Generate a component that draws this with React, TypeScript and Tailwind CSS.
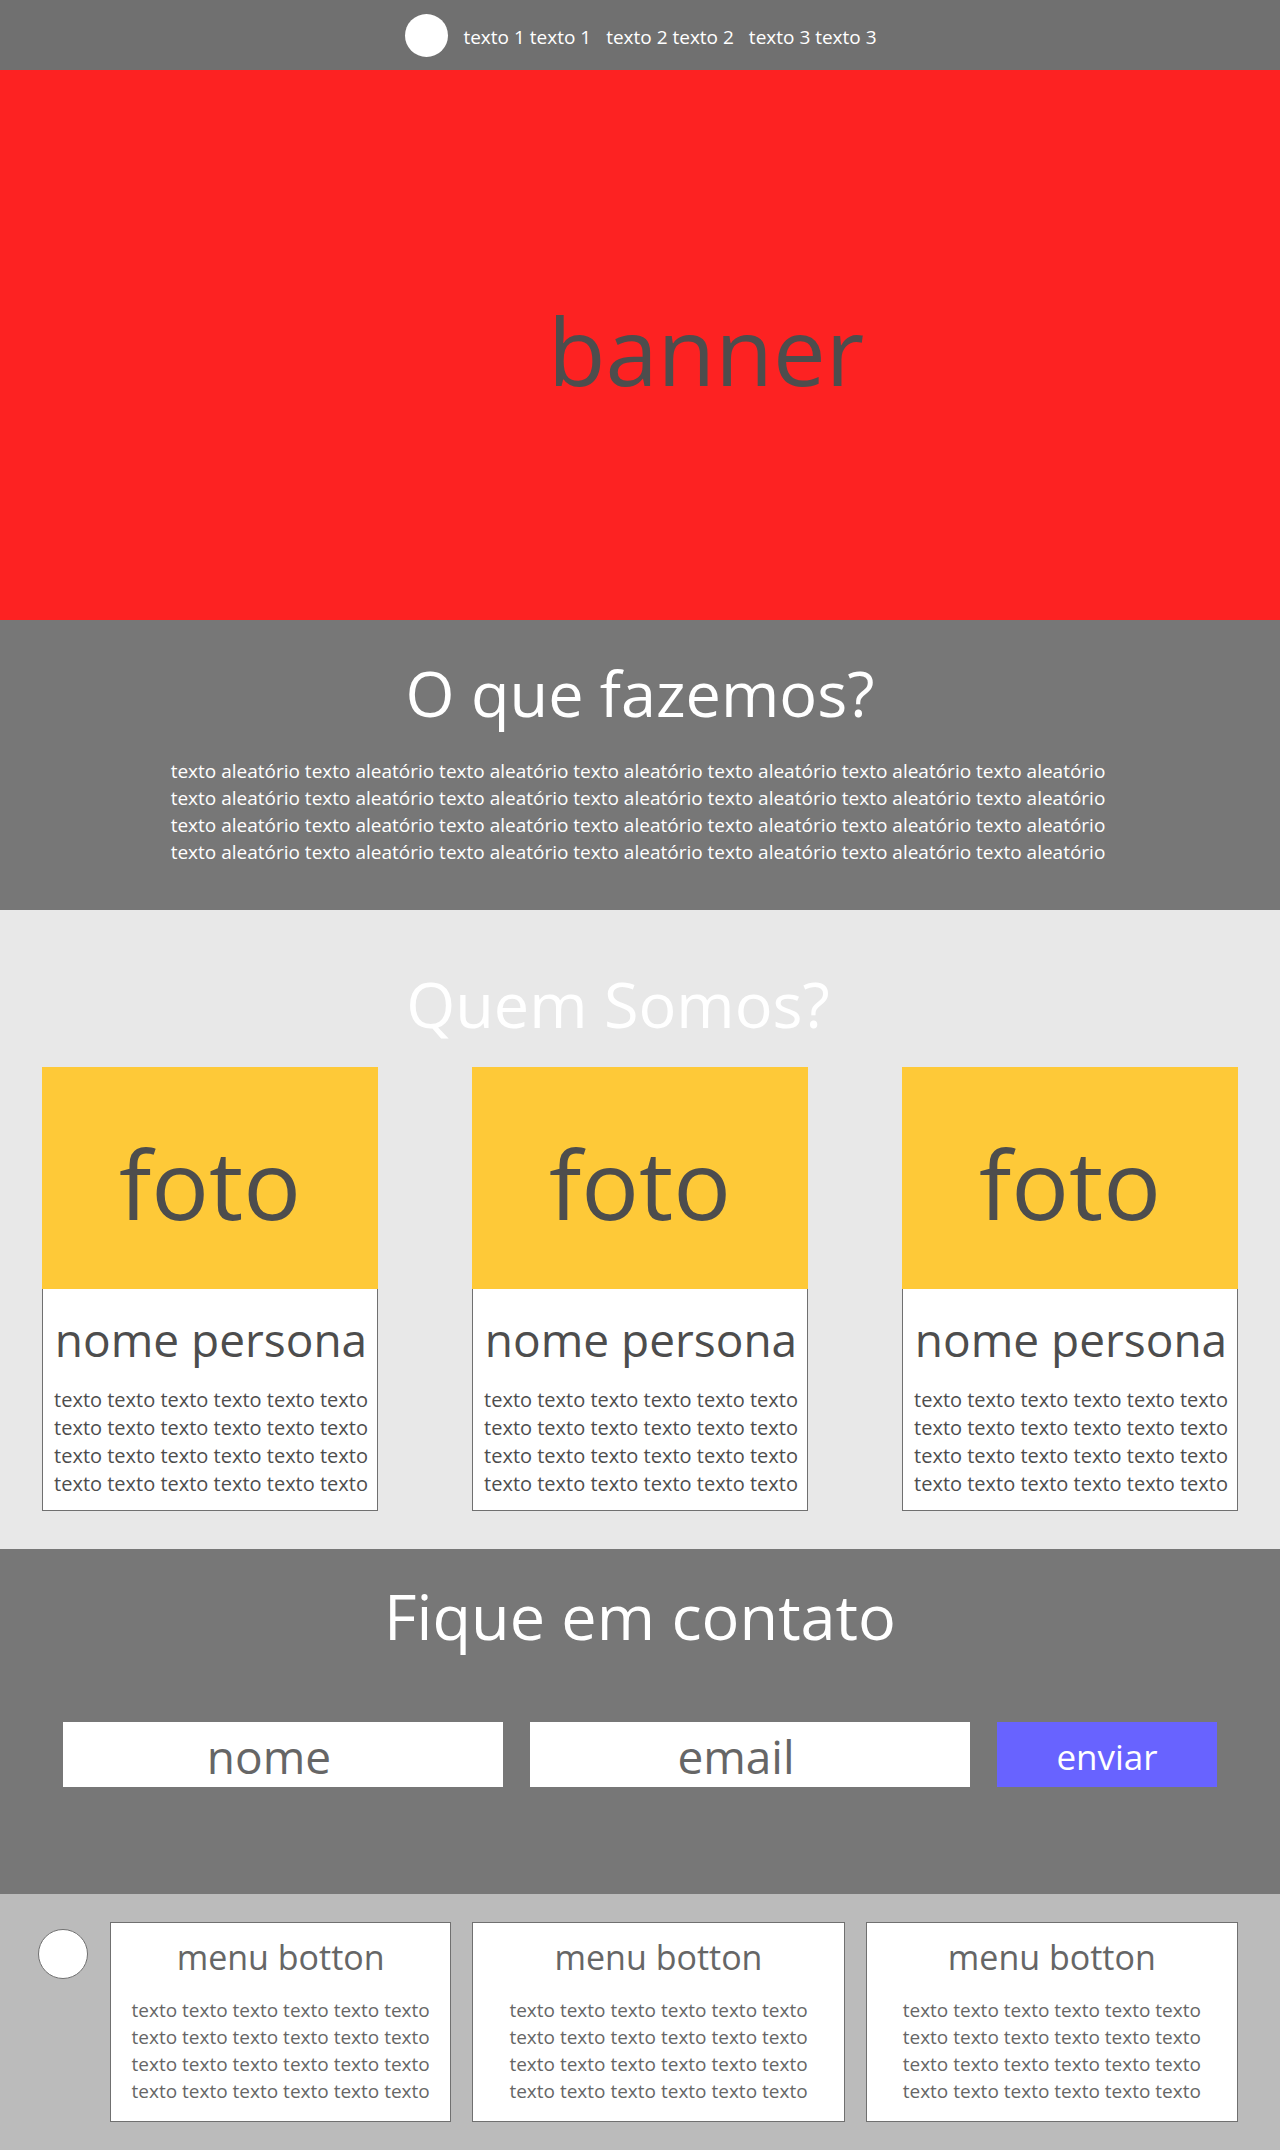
const navItems = ["texto 1 texto 1", "texto 2 texto 2", "texto 3 texto 3"];
const rows = [0, 1, 2, 3];
const aboutLine = Array(7).fill("texto aleatório").join(" ");
const shortLine = Array(6).fill("texto").join(" ");

function Lines({ text, className }: { text: string; className: string }) {
  return (
    <p className={className}>
      {rows.map((r) => (
        <span key={r} className="block whitespace-nowrap">
          {text}
        </span>
      ))}
    </p>
  );
}

function PersonCard() {
  return (
    <article className="min-w-0 text-center text-[#4d4d4d]">
      <div className="flex h-[222px] items-center justify-center bg-[#fec938] pt-2.5 text-[96px] leading-none">
        foto
      </div>
      <div className="border-x border-b border-[#707070] bg-white pt-[18px] pb-3 pl-0.5">
        <h3 className="text-[46px] leading-[64px] whitespace-nowrap">nome persona</h3>
        <Lines text={shortLine} className="mt-[15px] flex flex-col items-center text-[20px] leading-7" />
      </div>
    </article>
  );
}

function FooterCard() {
  return (
    <section className="min-w-0 border border-[#707070] bg-white pt-2.5 pb-4 text-center text-[#666666]">
      <h3 className="text-[34px] leading-[48px] whitespace-nowrap">menu botton</h3>
      <Lines text={shortLine} className="mt-4 flex flex-col items-center text-[19px] leading-[27px]" />
    </section>
  );
}

export default function App() {
  return (
    <div className="font-['Open_Sans','Noto_Sans',sans-serif] text-white">
      <header className="flex h-[70px] items-center justify-center gap-[15px] bg-[#707070] pl-0.5">
        <div className="size-[43px] rounded-full bg-white" />
        <nav className="flex gap-[15px] pt-1 text-[19px] leading-[27px]">
          {navItems.map((item) => (
            <a key={item} href="#" className="whitespace-nowrap">
              {item}
            </a>
          ))}
        </nav>
      </header>

      <section className="flex h-[550px] items-center justify-center bg-[#fd2222] pt-2.5 pl-[132px] text-[94px] leading-none text-[#4d4d4d]">
        banner
      </section>

      <section className="bg-[#777777] pt-8 pb-11">
        <h2 className="text-center text-[63px] leading-[82px]">O que fazemos?</h2>
        <Lines text={aboutLine} className="mt-6 flex flex-col items-center pr-1 text-[19px] leading-[27px]" />
      </section>

      <section className="bg-[#e8e8e8] px-[42px] pt-[53px] pb-[38px]">
        <h2 className="pr-[44px] text-center text-[63px] leading-[82px]">Quem Somos?</h2>
        <div className="mt-[22px] grid grid-cols-3 gap-[94px]">
          <PersonCard />
          <PersonCard />
          <PersonCard />
        </div>
      </section>

      <section className="bg-[#777777] px-[63px] pt-[26px] pb-[107px]">
        <h2 className="text-center text-[63px] leading-[82px]">Fique em contato</h2>
        <form className="mt-[65px] grid grid-cols-[2fr_2fr_1fr] gap-[27px]" onSubmit={(e) => e.preventDefault()}>
          <input
            type="text"
            aria-label="nome"
            placeholder="nome"
            className="h-[65px] w-full min-w-0 bg-white pt-1 pr-7 text-center text-[46px] text-[#666666] placeholder:text-[#666666]"
          />
          <input
            type="email"
            aria-label="email"
            placeholder="email"
            className="h-[65px] w-full min-w-0 bg-white pt-1 pr-7 text-center text-[46px] text-[#666666] placeholder:text-[#666666]"
          />
          <button type="submit" className="h-[65px] bg-[#6863ff] pt-1 text-[35px] leading-none">
            enviar
          </button>
        </form>
      </section>

      <footer className="flex items-start bg-[#bbbbbb] py-7 pr-[42px] pl-[38px]">
        <div className="mt-[7px] mr-[22px] size-[50px] shrink-0 rounded-full border border-[#707070] bg-white" />
        <div className="grid flex-1 grid-cols-[341fr_372fr_372fr] gap-[21px]">
          <FooterCard />
          <FooterCard />
          <FooterCard />
        </div>
      </footer>
    </div>
  );
}
